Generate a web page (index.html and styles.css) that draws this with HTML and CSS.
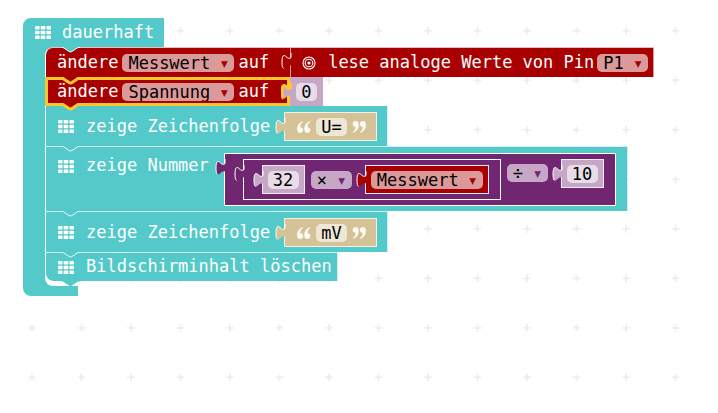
FILE: index.html
```html
<!DOCTYPE html>
<html lang="de">
<head>
<meta charset="utf-8">
<meta name="viewport" content="width=device-width, initial-scale=1">
<title>dauerhaft</title>
<link rel="stylesheet" href="styles.css">
</head>
<body>
<svg class="defs" aria-hidden="true">
  <symbol id="leds" viewBox="0 0 16 13">
    <rect x="0" y="0" width="4.6" height="3.6" rx="1"/><rect x="5.7" y="0" width="4.6" height="3.6" rx=".6"/><rect x="11.4" y="0" width="4.6" height="3.6" rx="1"/>
    <rect x="0" y="4.7" width="4.6" height="3.6" rx="1"/><rect x="5.7" y="4.7" width="4.6" height="3.6" rx=".6"/><rect x="11.4" y="4.7" width="4.6" height="3.6" rx="1"/>
    <rect x="0" y="9.4" width="4.6" height="3.6" rx="1"/><rect x="5.7" y="9.4" width="4.6" height="3.6" rx=".6"/><rect x="11.4" y="9.4" width="4.6" height="3.6" rx="1"/>
  </symbol>
  <symbol id="target" viewBox="0 0 14 14">
    <circle cx="7" cy="7" r="6" fill="none" stroke="#fff" stroke-width="1.1"/>
    <circle cx="7" cy="7" r="3.8" fill="none" stroke="#fff" stroke-width="1.1"/>
    <circle cx="7" cy="7" r="1.6" fill="#fff"/>
  </symbol>
  <symbol id="notch" viewBox="0 0 20 8">
    <path d="M1 0V1.500L2 1.500L8 5.500Q9.500 6.500 11 5.500L17 1.500L19 1.500V0Z" stroke="none"/>
    <path d="M1 1.500H2L8 5.500Q9.500 6.500 11 5.500L17 1.500H19" fill="none"/>
  </symbol>
  <symbol id="tab" viewBox="0 0 11 18">
    <path d="M11 4C9.500 6 7 5.500 5 3.500C2.500 1 1 3 1 9C1 15 2.500 17 5 14.500C7 12.500 9.500 11.500 11 13Z" stroke="none"/>
    <path d="M10 0V4.500C8.500 6 7 5.500 5 3.500C2.500 1 1 3 1 9C1 13 1.500 15 2.500 15.500" fill="none"/>
  </symbol>
  <symbol id="quote" viewBox="0 0 14 12">
    <path d="M5.500 0C2 1.500 0 4.500 0 8C0 10.500 1.300 12 3.200 12C5 12 6.200 10.800 6.200 9.100C6.200 7.400 5 6.300 3.300 6.300C3.300 4 4.200 2.300 6 1ZM12.700 0C9.200 1.500 7.200 4.500 7.200 8C7.200 10.500 8.500 12 10.400 12C12.200 12 13.400 10.800 13.400 9.100C13.400 7.400 12.200 6.300 10.500 6.300C10.500 4 11.400 2.300 13.200 1Z"/>
  </symbol>
</svg>

<main class="workspace">
  <svg class="grid" aria-hidden="true">
    <defs>
      <pattern id="crosses" x="7.250" y="6.050" width="49.500" height="49.500" patternUnits="userSpaceOnUse">
        <path d="M20.750 24.750H28.750M24.750 20.750V28.750" stroke="#e4e4e4" stroke-width="1"/>
      </pattern>
    </defs>
    <rect width="100%" height="100%" fill="url(#crosses)"/>
  </svg>

  <section class="loop">
    <header class="hat"><svg class="leds"><use href="#leds"/></svg><span class="word">dauerhaft</span></header>

    <div class="body">
      <div class="stmt variable first">
        <svg class="notch from-loop"><use href="#notch"/></svg>
        <div class="head">
          <label class="word" for="var1">ändere</label>
          <span class="drop"><select id="var1"><option>Messwert</option></select></span>
          <span class="word">auf</span>
        </div>
        <div class="value variable pin-read">
          <svg class="tab"><use href="#tab"/></svg>
          <svg class="target"><use href="#target"/></svg>
          <label class="word" for="pin">lese analoge Werte von Pin</label>
          <span class="drop"><select id="pin"><option>P1</option></select></span>
        </div>
      </div>

      <div class="stmt variable selected">
        <svg class="notch from-variable"><use href="#notch"/></svg>
        <div class="head">
          <label class="word" for="var2">ändere</label>
          <span class="drop"><select id="var2"><option>Spannung</option></select></span>
          <span class="word">auf</span>
        </div>
        <div class="value math open">
          <svg class="tab"><use href="#tab"/></svg>
          <input class="one" aria-label="Wert" value="0">
        </div>
      </div>

      <div class="stmt basic show-text after-selected">
        <svg class="notch from-variable"><use href="#notch"/></svg>
        <svg class="leds"><use href="#leds"/></svg>
        <label class="word" for="text1">zeige Zeichenfolge</label>
        <div class="value string">
          <svg class="tab"><use href="#tab"/></svg>
          <svg class="quote"><use href="#quote"/></svg>
          <input id="text1" value="U=">
          <svg class="quote closing"><use href="#quote"/></svg>
        </div>
      </div>

      <div class="stmt basic tall">
        <svg class="notch from-loop"><use href="#notch"/></svg>
        <svg class="leds"><use href="#leds"/></svg>
        <span class="word">zeige Nummer</span>
        <div class="value operator outer">
          <svg class="tab"><use href="#tab"/></svg>
          <div class="value operator inner">
            <svg class="tab"><use href="#tab"/></svg>
            <div class="value math">
              <svg class="tab"><use href="#tab"/></svg>
              <input aria-label="Faktor" value="32">
            </div>
            <span class="drop"><select aria-label="Operator"><option>×</option></select></span>
            <div class="value variable">
              <svg class="tab"><use href="#tab"/></svg>
              <span class="drop"><select aria-label="Variable"><option>Messwert</option></select></span>
            </div>
          </div>
          <span class="drop"><select aria-label="Operator"><option>÷</option></select></span>
          <div class="value math">
            <svg class="tab"><use href="#tab"/></svg>
            <input aria-label="Divisor" value="10">
          </div>
        </div>
      </div>

      <div class="stmt basic show-text">
        <svg class="notch from-loop"><use href="#notch"/></svg>
        <svg class="leds"><use href="#leds"/></svg>
        <label class="word" for="text2">zeige Zeichenfolge</label>
        <div class="value string">
          <svg class="tab"><use href="#tab"/></svg>
          <svg class="quote"><use href="#quote"/></svg>
          <input id="text2" value="mV">
          <svg class="quote closing"><use href="#quote"/></svg>
        </div>
      </div>

      <div class="stmt basic last">
        <svg class="notch from-loop"><use href="#notch"/></svg>
        <svg class="leds"><use href="#leds"/></svg>
        <span class="word">Bildschirminhalt löschen</span>
        <svg class="notch foot-notch"><use href="#notch"/></svg>
      </div>
      <svg class="cradle" viewBox="0 0 12 12"><path d="M0 0V12H9Q0 12 0 3Z"/></svg>
    </div>

    <div class="foot"></div>
  </section>
</main>
</body>
</html>
```
FILE: styles.css
```css
:root {
  --teal: #54c9c9;
  --red: #a80000;
  --purple: #712672;
  --lilac: #c6a8c6;
  --sand: #d5c297;
  --yellow: #ffc72c;
  --line: rgba(255, 255, 255, 0.75);
}

* { box-sizing: border-box; }

body {
  margin: 0;
  background: #fff;
  color: #fff;
  font: 17px/18px "DejaVu Sans Mono", monospace;
}

svg { display: block; flex: none; }
.defs { position: absolute; width: 0; height: 0; }

.workspace {
  position: relative;
  min-height: 100vh;
  padding: 18px 23px;
  overflow: hidden;
}

.grid {
  position: absolute;
  inset: 0;
  width: 100%;
  height: 100%;
}

.loop {
  position: relative;
  display: flex;
  flex-direction: column;
  align-items: flex-start;
  white-space: nowrap;
}

.word { padding-bottom: 2px; }

.hat {
  display: flex;
  align-items: center;
  gap: 11px;
  height: 29px;
  padding: 0 10px 0 12px;
  border-radius: 8px 0 0 0;
  background: var(--teal);
}

.body {
  position: relative;
  display: flex;
  flex-direction: column;
  align-items: flex-start;
  padding-bottom: 5px;
  border-left: 22px solid var(--teal);
}

.body::before {
  content: "";
  position: absolute;
  top: 0;
  left: 0;
  width: 12px;
  height: 12px;
  background: var(--teal);
}

.foot {
  width: 55px;
  height: 10px;
  border-radius: 0 0 0 8px;
  background: var(--teal);
}

.cradle {
  position: absolute;
  left: 0;
  bottom: 0;
  width: 12px;
  height: 12px;
  fill: var(--teal);
}

/* Statements */
.stmt {
  position: relative;
  display: flex;
  align-items: center;
  border: solid var(--line);
  border-width: 1px 1px 0 1px;
  border-left-color: #fff;
}

.stmt.variable { align-items: stretch; border-right: 0; }
.stmt.first { border-top-left-radius: 8px; }

.stmt.basic {
  gap: 12px;
  min-height: 29px;
  padding: 5px 10px 5px 12px;
}

.stmt.basic > .value { margin-left: 3px; }
.stmt.show-text { padding-top: 6px; }
.stmt.show-text > .value { margin-left: 2px; }

.stmt.tall { align-items: flex-start; padding: 6px 11px 5px 12px; }
.stmt.tall > .word { margin-top: 3px; }
.stmt.tall > .leds { margin-top: 7px; }

.stmt.last { padding: 0 5px 0 12px; border-bottom-left-radius: 8px; }
.stmt.after-selected { border-top-width: 0; }

.stmt.selected { border: 0; }
.stmt.selected .head { border: 3px solid var(--yellow); padding: 0 18px 0 9px; }

.head {
  display: flex;
  align-items: center;
  gap: 4px;
  padding: 0 21px 0 11px;
}

.basic { background: var(--teal); }
.variable { background: var(--red); }
.stmt.variable.selected { background: none; }
.stmt.selected .head { background: var(--red); }
.operator { background: var(--purple); }
.math { background: var(--lilac); }
.string { background: var(--sand); }

/* Value blocks plugged into a statement or another value */
.value {
  position: relative;
  display: flex;
  align-items: center;
  min-height: 29px;
  padding: 0 5px;
  border: 1px solid var(--line);
}

.value.open { border-color: var(--lilac); }
.value.string { gap: 5px; padding: 0 10px 0 12px; }
.pin-read { padding: 0 5px 0 11px; border-color: rgba(255, 255, 255, 0.6); border-width: 0 1px 0 1px; }
.pin-read .drop { margin-left: 3px; }

.operator { gap: 6px; }
.operator > .value.math,
.operator > .value.variable { border-color: #f4ecf4; }
.outer { align-items: flex-start; padding: 5px 11px 5px 18px; border-color: #fff; }
.outer > .drop { margin-top: 5px; }
.inner { padding: 5px 11px 5px 18px; border-color: #fff; }
.drop + .value { margin-left: 7px; }

/* Connectors */
.tab {
  position: absolute;
  left: -10px;
  top: 5px;
  width: 11px;
  height: 18px;
  stroke: #fff;
  stroke-width: 1px;
}

.variable > .tab { fill: var(--red); }
.operator > .tab { fill: var(--purple); }
.math > .tab { fill: var(--lilac); }
.string > .tab { fill: var(--sand); }
.selected .tab { stroke: var(--yellow); stroke-width: 3px; overflow: visible; }

.notch {
  position: absolute;
  left: 15px;
  top: -2px;
  width: 20px;
  height: 8px;
  stroke: #e9f9f9;
  stroke-width: 1px;
}

.from-loop { fill: var(--teal); }
.from-variable { fill: var(--red); stroke: var(--yellow); stroke-width: 3px; overflow: visible; }
.selected .notch { left: 16px; top: 0; }
.after-selected .notch { top: -3px; }
.last .foot-notch { top: 100%; margin-top: -1px; fill: var(--teal); stroke: none; }

/* Fields */
.drop { position: relative; display: flex; }

.drop::after {
  content: "▾";
  position: absolute;
  right: 5px;
  top: 0;
  color: var(--red);
  pointer-events: none;
}

.operator > .drop::after { color: var(--purple); }

select,
input {
  height: 18px;
  margin: 0;
  border: 0;
  border-radius: 5px;
  color: #000;
  font: inherit;
}

select {
  appearance: none;
  padding: 0 24px 0 6px;
  background: #dc9999;
}

.operator > .drop select { background: #c6a8c6; }

input {
  box-sizing: content-box;
  width: 21px;
  padding: 0 5px;
  background: #e8dce8;
}

input.one { width: 11px; }
.string input { background: #eee7d6; }

/* Icons */
.leds { width: 16px; height: 13px; fill: #fff; }
.target { width: 14px; height: 14px; margin-right: 12px; }
.quote { width: 14px; height: 12px; fill: #fff; opacity: 0.9; }
.closing { transform: rotate(180deg); }
```
